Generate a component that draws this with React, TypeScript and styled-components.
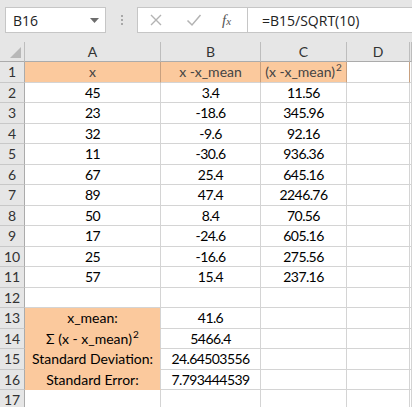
import React from 'react';
import styled, { createGlobalStyle } from 'styled-components';

const GlobalStyle = createGlobalStyle`
    html, body {
        margin: 0;
        padding: 0;
        background: #e6e6e6;
        overflow: hidden;
    }
`;

const Sup = styled.sup`
    font-size: 10px;
    line-height: 0;
    vertical-align: 6px;
    margin-left: 1px;
`;

type Cell = { text: React.ReactNode; fill?: boolean };

function buildRows(): Cell[][] {
    const sq = <Sup>2</Sup>;
    const e = { text: '' };
    return [
        [{ text: 'x', fill: true }, { text: 'x -x_mean', fill: true }, { text: <>(x -x_mean){sq}</>, fill: true }, e],
        [{ text: '45' }, { text: '3.4' }, { text: '11.56' }, e],
        [{ text: '23' }, { text: '-18.6' }, { text: '345.96' }, e],
        [{ text: '32' }, { text: '-9.6' }, { text: '92.16' }, e],
        [{ text: '11' }, { text: '-30.6' }, { text: '936.36' }, e],
        [{ text: '67' }, { text: '25.4' }, { text: '645.16' }, e],
        [{ text: '89' }, { text: '47.4' }, { text: '2246.76' }, e],
        [{ text: '50' }, { text: '8.4' }, { text: '70.56' }, e],
        [{ text: '17' }, { text: '-24.6' }, { text: '605.16' }, e],
        [{ text: '25' }, { text: '-16.6' }, { text: '275.56' }, e],
        [{ text: '57' }, { text: '15.4' }, { text: '237.16' }, e],
        [e, e, e, e],
        [{ text: 'x_mean:', fill: true }, { text: '41.6' }, e, e],
        [{ text: <>Σ (x - x_mean){sq}</>, fill: true }, { text: '5466.4' }, e, e],
        [{ text: 'Standard Deviation:', fill: true }, { text: '24.64503556' }, e, e],
        [{ text: 'Standard Error:', fill: true }, { text: '7.793444539' }, e, e],
        [e, e, e, e],
    ];
}

function App() {
    const rows = buildRows();
    return (
        <Page>
            <GlobalStyle />
            <Toolbar>
                <NameBox>
                    <span>B16</span>
                    <svg width="9" height="5" viewBox="0 0 9 5">
                        <polygon points="0,0 9,0 4.5,5" fill="#6d6d6d" />
                    </svg>
                </NameBox>
                <Dots>
                    <i />
                    <i />
                    <i />
                </Dots>
                <ActionBox>
                    <svg width="14" height="14" viewBox="0 0 14 14">
                        <path d="M2 2 L12 12 M12 2 L2 12" stroke="#b3b3b3" strokeWidth="1.4" fill="none" />
                    </svg>
                    <svg width="16" height="14" viewBox="0 0 16 14">
                        <path d="M1.5 7.5 L6 12 L14.5 2" stroke="#b3b3b3" strokeWidth="1.5" fill="none" />
                    </svg>
                    <Fx>
                        f<small>x</small>
                    </Fx>
                </ActionBox>
                <FormulaBox>=B15/SQRT(10)</FormulaBox>
            </Toolbar>
            <Sheet>
                <Corner>
                    <svg width="11" height="11" viewBox="0 0 11 11">
                        <polygon points="11,0 11,11 0,11" fill="#b8b8b8" />
                    </svg>
                </Corner>
                {['A', 'B', 'C', 'D', ''].map((c, i) => (
                    <ColHeader key={i}>{c}</ColHeader>
                ))}
                {rows.map((r, ri) => (
                    <React.Fragment key={ri}>
                        <RowHeader>{ri + 1}</RowHeader>
                        {r.map((c, ci) => (
                            <DataCell key={ci} $fill={!!c.fill} $header={ri === 0} $num={!c.fill}>
                                <span>{c.text}</span>
                            </DataCell>
                        ))}
                        <DataCell $fill={false} $header={false} $num={false} />
                    </React.Fragment>
                ))}
            </Sheet>
        </Page>
    );
}

export default App;

const Page = styled.div`
    width: 412px;
    height: 407px;
    overflow: hidden;
    background: #e6e6e6;
`;

const Toolbar = styled.div`
    height: 42px;
    display: flex;
    align-items: flex-start;
    padding: 7px 0 0 5px;
    box-sizing: border-box;
`;

const NameBox = styled.div`
    width: 101px;
    height: 26px;
    box-sizing: border-box;
    background: #fff;
    border: 1px solid #c6c6c6;
    display: flex;
    align-items: center;
    justify-content: space-between;
    padding: 0 6px 0 7px;
    font-family: 'Open Sans', sans-serif;
    font-size: 14px;
    color: #222;
`;

const Dots = styled.div`
    width: 31px;
    height: 26px;
    display: flex;
    flex-direction: column;
    align-items: center;
    justify-content: center;
    gap: 2px;

    i {
        width: 2px;
        height: 2px;
        background: #a8a8a8;
    }
`;

const ActionBox = styled.div`
    width: 110px;
    height: 26px;
    box-sizing: border-box;
    background: #fff;
    border: 1px solid #c6c6c6;
    border-right: none;
    display: flex;
    align-items: center;
    padding-left: 11px;

    svg:nth-child(2) {
        margin-left: 23px;
    }
`;

const Fx = styled.span`
    font-family: 'Liberation Serif', serif;
    font-style: italic;
    font-size: 15px;
    color: #555;
    margin-left: 20px;

    small {
        font-size: 11px;
    }
`;

const FormulaBox = styled.div`
    flex: 1;
    height: 26px;
    box-sizing: border-box;
    background: #fff;
    border: 1px solid #c6c6c6;
    border-right: none;
    display: flex;
    align-items: center;
    padding-left: 14px;
    font-family: 'Open Sans', sans-serif;
    font-size: 14px;
    color: #222;
`;

const Sheet = styled.div`
    display: grid;
    grid-template-columns: 25px 136px 100px 86px 63px 2px;
    grid-template-rows: 20px repeat(17, 20.5px);
    background: #fff;
`;

const Corner = styled.div`
    background: #e6e6e6;
    border-right: 1px solid #bdbdbd;
    border-bottom: 1px solid #ababab;
    display: flex;
    align-items: flex-end;
    justify-content: flex-end;
    padding: 0 3px 3px 0;
`;

const ColHeader = styled.div`
    background: #e6e6e6;
    border-right: 1px solid #bdbdbd;
    border-bottom: 1px solid #ababab;
    display: flex;
    align-items: center;
    justify-content: center;
    font-family: 'Lato', sans-serif;
    font-size: 14px;
    color: #333;
`;

const RowHeader = styled.div`
    background: #e6e6e6;
    border-right: 1px solid #ababab;
    border-bottom: 1px solid #c8c8c8;
    display: flex;
    align-items: center;
    justify-content: center;
    font-family: 'Lato', sans-serif;
    font-size: 14px;
    color: #333;
`;

const DataCell = styled.div<{ $fill: boolean; $header: boolean; $num: boolean }>`
    background: ${(p) => (p.$fill ? '#fbc99d' : '#fff')};
    border-right: 1px solid ${(p) => (p.$header ? '#c8a07f' : '#d4d4d4')};
    border-bottom: 1px solid ${(p) => (p.$fill && !p.$header ? '#fbc99d' : '#d4d4d4')};
    display: flex;
    align-items: center;
    justify-content: center;
    font-family: 'Lato', sans-serif;
    font-size: 14px;
    letter-spacing: ${(p) => (p.$num ? '-0.6px' : '0')};
    color: ${(p) => (p.$header ? '#444' : '#000')};
    white-space: nowrap;
    overflow: hidden;
    min-width: 0;
`;
